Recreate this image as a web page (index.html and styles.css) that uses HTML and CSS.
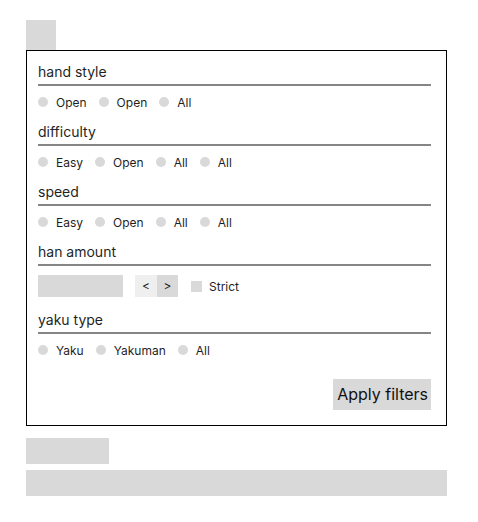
FILE: index.html
```html
<!DOCTYPE html>
<html lang="en">
<head>
<meta charset="utf-8">
<title>Filters</title>
<link rel="stylesheet" href="styles.css">
</head>
<body>
<div class="page">
  <div class="logo"></div>
  <form class="panel">
    <div class="section">
      <div class="title">hand style</div>
      <div class="options">
        <label class="opt"><span class="dot"></span>Open</label>
        <label class="opt"><span class="dot"></span>Open</label>
        <label class="opt"><span class="dot"></span>All</label>
      </div>
    </div>
    <div class="section">
      <div class="title">difficulty</div>
      <div class="options">
        <label class="opt"><span class="dot"></span>Easy</label>
        <label class="opt"><span class="dot"></span>Open</label>
        <label class="opt"><span class="dot"></span>All</label>
        <label class="opt"><span class="dot"></span>All</label>
      </div>
    </div>
    <div class="section">
      <div class="title">speed</div>
      <div class="options">
        <label class="opt"><span class="dot"></span>Easy</label>
        <label class="opt"><span class="dot"></span>Open</label>
        <label class="opt"><span class="dot"></span>All</label>
        <label class="opt"><span class="dot"></span>All</label>
      </div>
    </div>
    <div class="section">
      <div class="title">han amount</div>
      <div class="controls">
        <span class="field"></span>
        <span class="stepper"><span class="step step-prev">&lt;</span><span class="step step-next">&gt;</span></span>
        <label class="check"><span class="box"></span>Strict</label>
      </div>
    </div>
    <div class="section">
      <div class="title">yaku type</div>
      <div class="options">
        <label class="opt"><span class="dot"></span>Yaku</label>
        <label class="opt"><span class="dot"></span>Yakuman</label>
        <label class="opt"><span class="dot"></span>All</label>
      </div>
    </div>
    <div class="actions">
      <span class="apply">Apply filters</span>
    </div>
  </form>
  <div class="chip"></div>
  <div class="bar"></div>
</div>
</body>
</html>
```
FILE: styles.css
```css
* { box-sizing: border-box; }
html, body { margin: 0; padding: 0; background: #fff; }
body {
  font-family: Inter, "Noto Sans", "Liberation Sans", sans-serif;
  color: #1f1f1f;
}
.page {
  width: 421px;
  margin: 20px 0 0 26px;
}
.logo {
  width: 30px;
  height: 30px;
  background: #d9d9d9;
}
.panel {
  margin: 0;
  border: 1px solid #000;
  padding: 10px 15px 15px 11px;
}
.title {
  font-size: 14px;
  line-height: 20px;
  padding-top: 1px;
  padding-bottom: 2px;
  border-bottom: 2px solid #858585;
}
.options {
  display: flex;
  align-items: center;
  gap: 12px;
  height: 20px;
  margin: 6px 0 9px;
  font-size: 12px;
}
.opt {
  display: flex;
  align-items: center;
  gap: 8px;
}
.dot {
  width: 10px;
  height: 10px;
  border-radius: 50%;
  background: #d9d9d9;
}
.controls {
  display: flex;
  align-items: center;
  height: 22px;
  margin: 9px 0 12px;
  font-size: 12px;
}
.field {
  width: 85px;
  height: 22px;
  background: #d9d9d9;
}
.stepper {
  display: flex;
  margin-left: 12px;
}
.step {
  width: 22px;
  height: 22px;
  line-height: 22px;
  text-align: center;
  font-size: 12px;
}
.step-prev { background: #efefef; }
.step-next { background: #d9d9d9; width: 21px; }
.check {
  display: flex;
  align-items: center;
  gap: 7px;
  margin-left: 13px;
}
.box {
  width: 11px;
  height: 11px;
  background: #d9d9d9;
}
.section:last-of-type .options { margin-bottom: 0; }
.actions {
  display: flex;
  justify-content: flex-end;
  margin-top: 19px;
}
.apply {
  background: #d9d9d9;
  font-size: 16px;
  line-height: 19px;
  padding: 6px 3px 6px 4px;
  color: #111;
}
.chip {
  width: 83px;
  height: 26px;
  margin-top: 12px;
  background: #d9d9d9;
}
.bar {
  height: 26px;
  margin-top: 6px;
  background: #d9d9d9;
}
```
